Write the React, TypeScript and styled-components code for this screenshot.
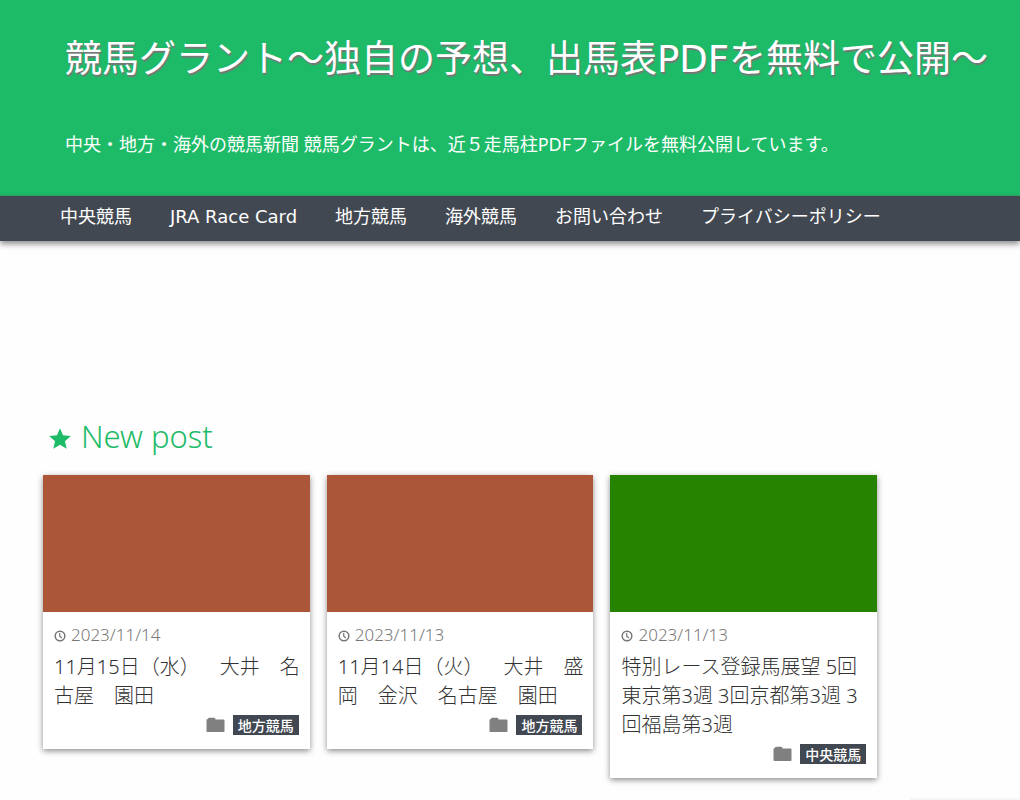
import React from "react";
import styled, { createGlobalStyle } from "styled-components";

const GlobalStyle = createGlobalStyle`
  *, *::before, *::after { box-sizing: border-box; }
  body {
    margin: 0;
    background: #fefefe;
    color: #333;
    font-family: "Noto Sans", "Noto Sans CJK JP", sans-serif;
    text-spacing-trim: space-all;
  }
  a { color: inherit; text-decoration: none; }
`;

const wide = `"DejaVu Sans", "Noto Sans CJK JP", sans-serif`;
const cjkFirst = `"Noto Sans CJK JP", sans-serif`;

const Header = styled.header`
  height: 196px;
  padding: 34px 0 0 65px;
  background: #1dbb68;
  border-bottom: 1px solid #2faa68;
  color: #fff;
`;

const SiteTitle = styled.h1`
  margin: 0;
  font: 400 37px/52px ${wide};
  white-space: nowrap;
  text-shadow: 1px 2px 1px #777;
`;

const Tagline = styled.p`
  margin: 45px 0 0;
  font-size: 18px;
  line-height: 26px;
`;

const Nav = styled.nav`
  background: #424851;
  padding: 0 0 0 41px;
  box-shadow: 0 3px 6px rgba(0, 0, 0, 0.45);
`;

const NavList = styled.ul`
  display: flex;
  flex-wrap: wrap;
  margin: 0;
  padding: 0;
  list-style: none;
`;

const NavLink = styled.a`
  display: block;
  padding: 0 19px 3px;
  color: #fff;
  font: 400 18px/42px ${wide};
`;

const Main = styled.main`
  padding: 174px 14% 16px 43px;
`;

const SectionTitle = styled.h2`
  display: flex;
  align-items: center;
  gap: 8px;
  margin: 0 0 18px;
  padding-left: 4px;
  color: #1dbb68;
  font-size: 31px;
  font-weight: 300;
  line-height: 42px;

  svg { margin-top: 6px; }
`;

const Cards = styled.div`
  display: grid;
  grid-template-columns: repeat(3, 1fr);
  align-items: start;
  gap: 17px;
`;

const Card = styled.article`
  background: #fff;
  box-shadow: 0 2px 6px rgba(0, 0, 0, 0.45);
`;

const Thumb = styled.div<{ $color: string }>`
  height: 137px;
  background: ${(p) => p.$color};
`;

const CardBody = styled.div`
  padding: 11px 8px 14px 11px;
`;

const PostDate = styled.time`
  display: flex;
  align-items: center;
  gap: 5px;
  color: #777;
  font-size: 17px;
  font-weight: 300;
  line-height: 24px;

  svg { margin-top: 2px; }
`;

const PostTitle = styled.h3`
  margin: 5px 0 0;
  font-size: 20px;
  font-weight: 300;
  line-height: 29px;
  word-break: break-all;
`;

const Category = styled.div`
  display: flex;
  justify-content: flex-end;
  align-items: center;
  gap: 8px;
  margin: 5px 3px 0 0;
`;

const Tag = styled.a`
  padding: 0 5px;
  background: #424851;
  color: #fff;
  font: 500 14px/20px ${cjkFirst};
`;

const BottomPanel = styled.aside`
  position: fixed;
  right: 0;
  bottom: 0;
  width: 110px;
  height: 1px;
  border-radius: 2px 0 0 0;
  background: #f6f6f6;
  box-shadow: 0 0 2px rgba(0, 0, 0, 0.15);
`;

const StarIcon = () => (
  <svg width="26" height="26" viewBox="0 0 24 24" fill="currentColor" aria-hidden="true">
    <path d="M12 17.27 18.18 21l-1.64-7.03L22 9.24l-7.19-.61L12 2 9.19 8.63 2 9.24l5.46 4.73L5.82 21z" />
  </svg>
);

const ClockIcon = () => (
  <svg width="12" height="12" viewBox="0 0 12 12" fill="none" stroke="currentColor" aria-hidden="true">
    <circle cx="6" cy="6" r="4.8" strokeWidth="1.5" />
    <path d="M5.7 3v3.2l2.2 1.8" strokeWidth="1.2" />
  </svg>
);

const FolderIcon = () => (
  <svg width="19" height="16" viewBox="0 0 19 16" fill="#808080" aria-hidden="true">
    <path d="M.5 2.5 2 2V1.4Q2.3.8 3 .8H8.2Q9 .8 9.2 1.6L9.6 2.4H17.6Q18.5 2.4 18.5 3.3V14.2Q18.5 15 17.6 15H1.3Q.5 15 .5 14.2Z" />
  </svg>
);

const navItems = [
  "中央競馬",
  "JRA Race Card",
  "地方競馬",
  "海外競馬",
  "お問い合わせ",
  "プライバシーポリシー",
];

const posts = [
  { date: "2023/11/14", title: "11月15日（水）　大井　名古屋　園田", category: "地方競馬", color: "#ab5539" },
  { date: "2023/11/13", title: "11月14日（火）　大井　盛岡　金沢　名古屋　園田", category: "地方競馬", color: "#ab5539" },
  { date: "2023/11/13", title: "特別レース登録馬展望 5回東京第3週 3回京都第3週 3回福島第3週", category: "中央競馬", color: "#268300" },
];

export default function App() {
  return (
    <>
      <GlobalStyle />
      <Header>
        <SiteTitle>
          <a href="#top">競馬グラント～独自の予想、出馬表PDFを無料で公開～</a>
        </SiteTitle>
        <Tagline>
          中央・地方・海外の競馬新聞 競馬グラントは、近５走馬柱PDFファイルを無料公開しています。
        </Tagline>
      </Header>
      <Nav>
        <NavList>
          {navItems.map((label) => (
            <li key={label}>
              <NavLink href="#nav">{label}</NavLink>
            </li>
          ))}
        </NavList>
      </Nav>
      <Main>
        <SectionTitle>
          <StarIcon />
          New post
        </SectionTitle>
        <Cards>
          {posts.map((post) => (
            <Card key={post.title}>
              <Thumb $color={post.color} />
              <CardBody>
                <PostDate dateTime={post.date.replace(/\//g, "-")}>
                  <ClockIcon />
                  {post.date}
                </PostDate>
                <PostTitle>
                  <a href="#post">{post.title}</a>
                </PostTitle>
                <Category>
                  <FolderIcon />
                  <Tag href="#category">{post.category}</Tag>
                </Category>
              </CardBody>
            </Card>
          ))}
        </Cards>
      </Main>
      <BottomPanel />
    </>
  );
}
